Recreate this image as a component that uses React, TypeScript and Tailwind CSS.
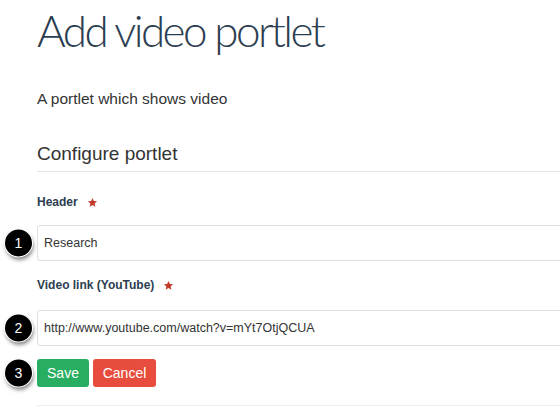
import type { ReactElement } from "react";

// Badge tron den danh so buoc
function StepBadge({ n }: { n: number }): ReactElement {
  return (
    <span className="absolute left-[-32px] top-1/2 flex h-[27px] w-[27px] -translate-y-1/2 items-center justify-center rounded-full bg-black text-[14px] text-white shadow-[1px_3px_4px_rgba(0,0,0,0.55)] ring-1 ring-white">
      {n}
    </span>
  );
}

function Star(): ReactElement {
  return (
    <svg viewBox="0 0 24 24" className="ml-[9px] inline-block h-[11px] w-[11px] fill-[#c0392b]">
      <path d="M12 2l2.9 6.9 7.1.6-5.4 4.7 1.6 7L12 17.5 5.8 21.2l1.6-7L2 9.5l7.1-.6z" />
    </svg>
  );
}

export default function App(): ReactElement {
  return (
    <div className="h-[419px] w-[560px] overflow-hidden bg-white pl-[37px] font-['Liberation_Sans',Arial,sans-serif] text-[#333]">
      <h1 className="mt-[4px] font-['Lato',sans-serif] text-[44px] font-light leading-[52px] tracking-[-2.6px] text-[#2c3e50]">
        Add video portlet
      </h1>
      <p className="mt-[33px] text-[15.5px] leading-[20px]">A portlet which shows video</p>

      <div className="mt-[32px] w-[600px] border-b border-[#e5e5e5] pb-[4px]">
        <h2 className="text-[19px] leading-[26px]">Configure portlet</h2>
      </div>

      <label className="mt-[22px] flex items-center text-[12px] font-bold leading-[16px] text-[#2c3e50]">
        Header <Star />
      </label>
      <div className="relative mt-[15px] w-[600px]">
        <StepBadge n={1} />
        <div className="flex h-[36px] items-center rounded-[3px] border border-[#e0e0e0] bg-white pl-[6px] text-[12.5px] text-[#333]">
          Research
        </div>
      </div>

      <label className="mt-[16px] flex items-center text-[12px] font-bold leading-[16px] text-[#2c3e50]">
        Video link (YouTube) <Star />
      </label>
      <div className="relative mt-[17px] w-[600px]">
        <StepBadge n={2} />
        <div className="flex h-[36px] items-center rounded-[3px] border border-[#e0e0e0] bg-white pl-[6px] text-[12.5px] text-[#333]">
          http://www.youtube.com/watch?v=mYt7OtjQCUA
        </div>
      </div>

      <div className="relative mt-[13px] flex gap-[4px]">
        <StepBadge n={3} />
        <button className="h-[28px] w-[52px] rounded-[3px] bg-[#27ae60] text-[14px] text-white">Save</button>
        <button className="h-[28px] w-[63px] rounded-[3px] bg-[#e74c3c] text-[14px] text-white">Cancel</button>
      </div>

      <div className="mt-[18px] w-[600px] border-b border-[#eeeeee]" />
    </div>
  );
}
